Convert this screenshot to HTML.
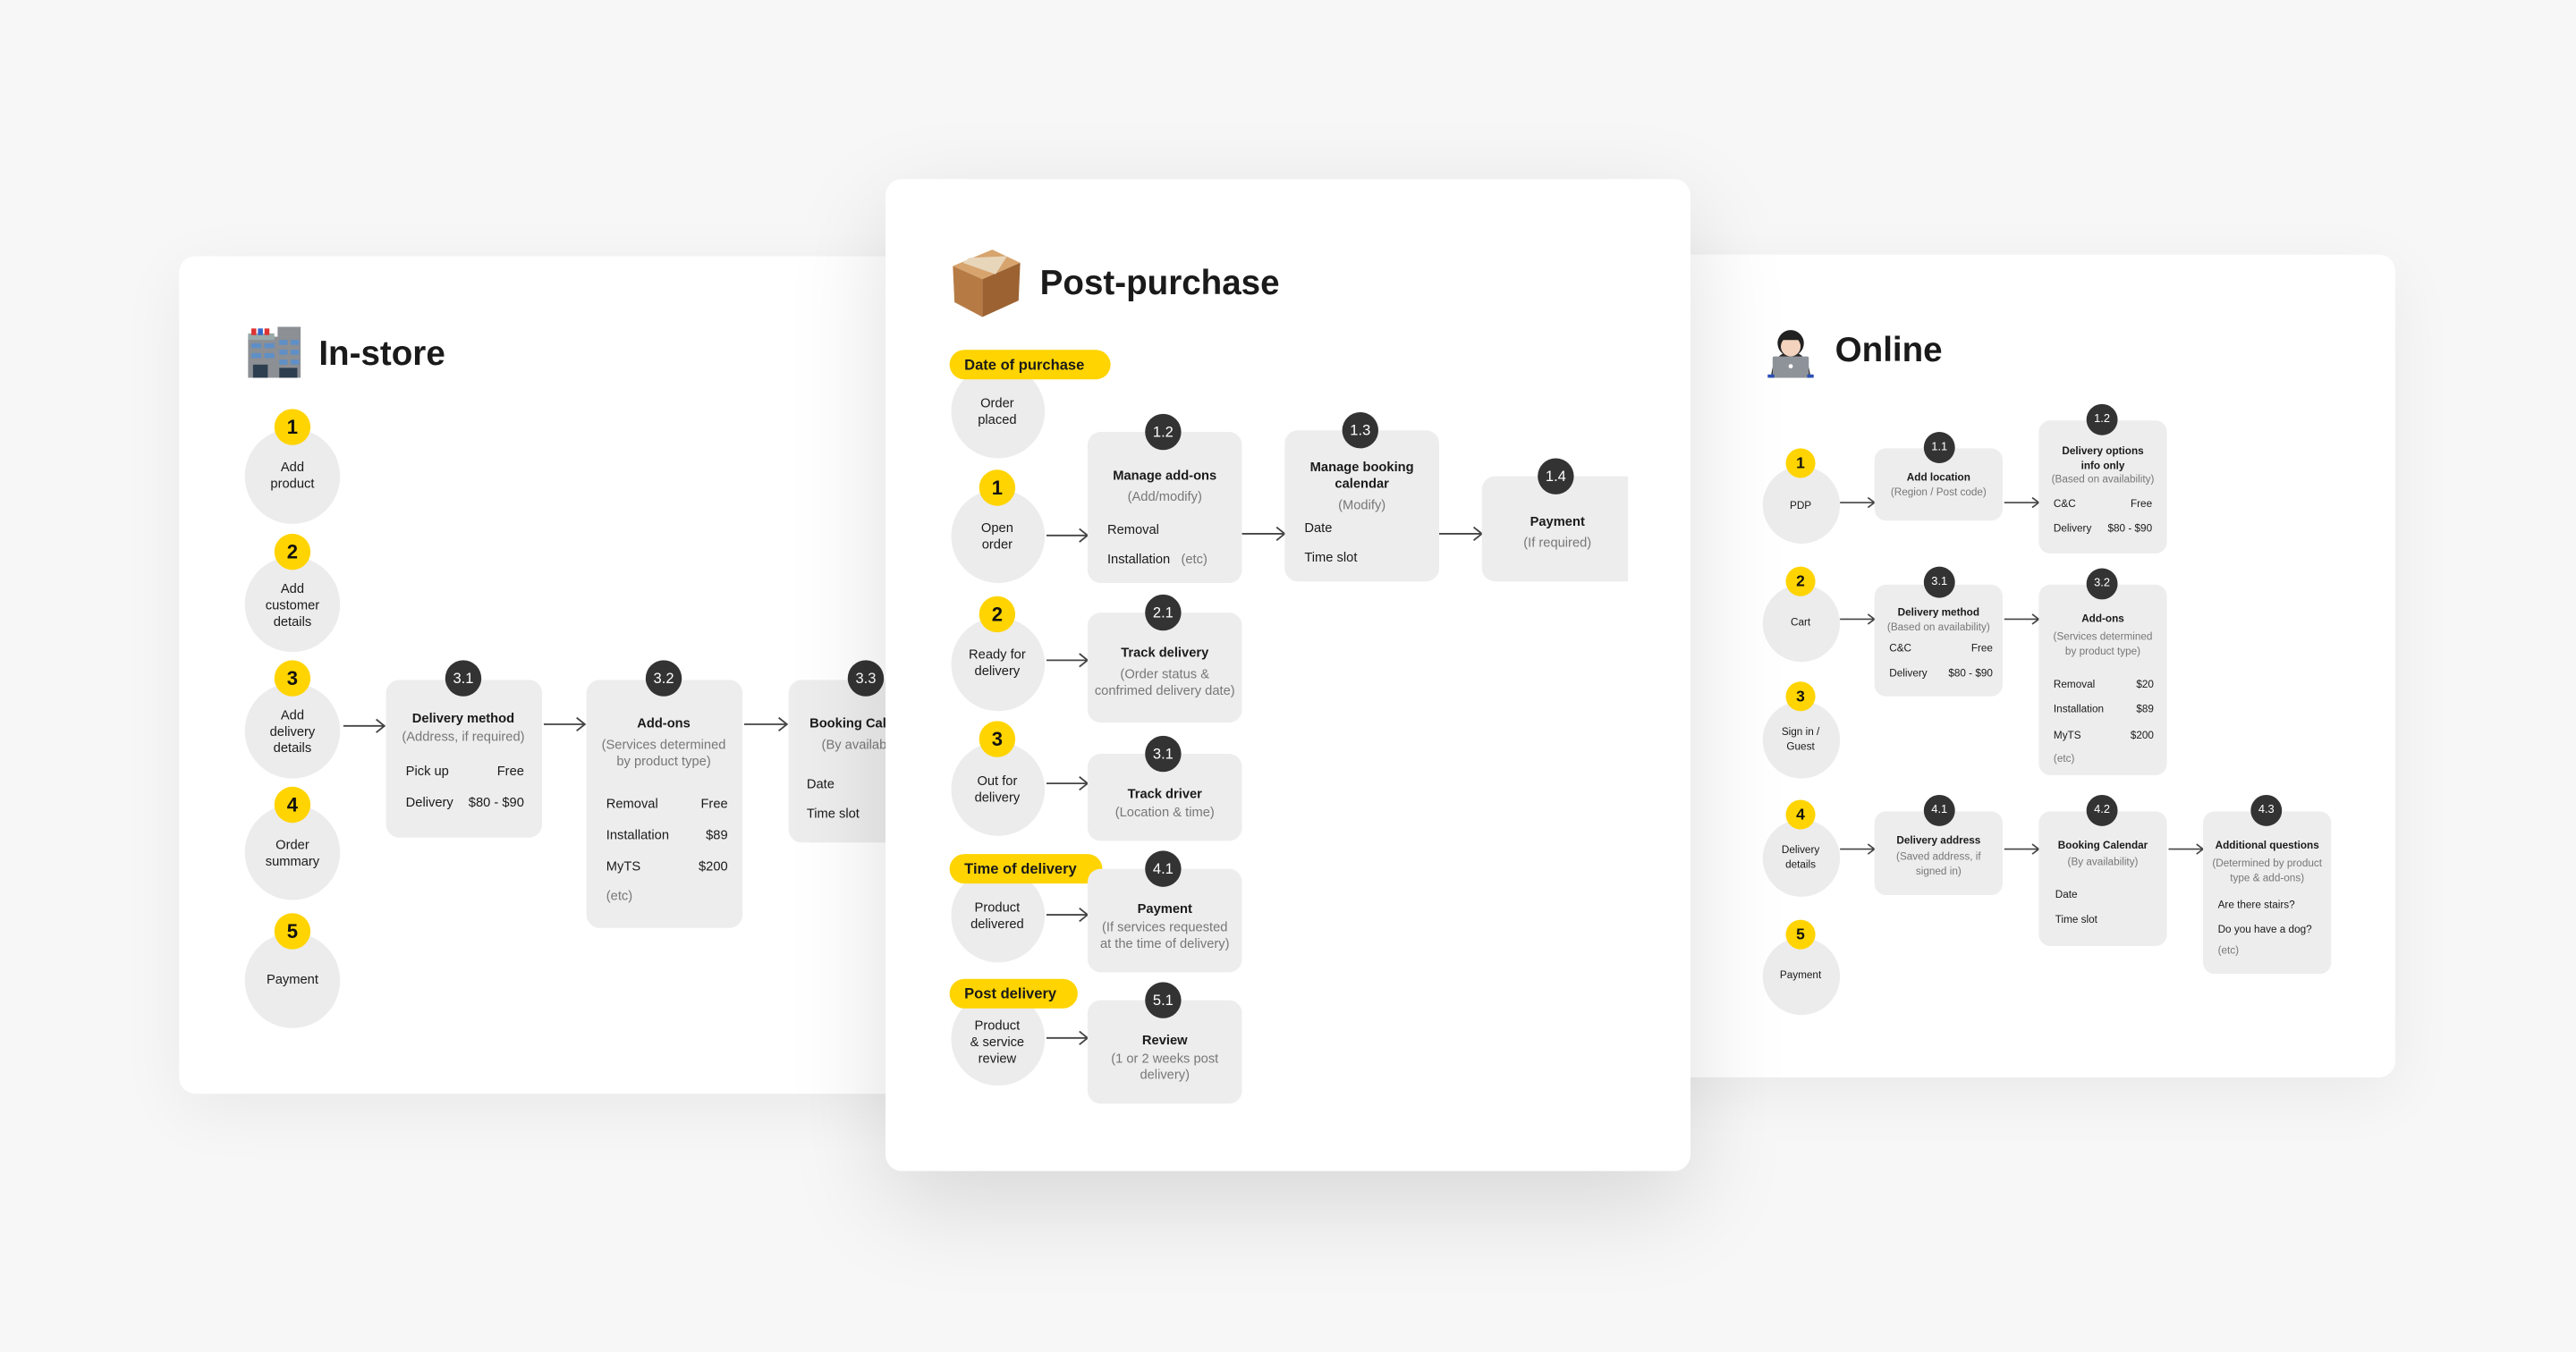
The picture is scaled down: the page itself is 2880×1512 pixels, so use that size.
<!DOCTYPE html>
<html><head><meta charset="utf-8"><style>
html,body{margin:0;padding:0;width:2880px;height:1511px;overflow:hidden;background:#f7f7f7}
#w{position:absolute;left:0;top:0;width:1568px;height:823px;transform:scale(1.83673);transform-origin:0 0;font-family:"Liberation Sans",sans-serif;color:#1a1a1a}
.L{position:absolute;left:0;top:0;width:1568px;height:823px}
.card{position:absolute;background:#fff;border-radius:10px}
.c{position:absolute;border-radius:50%;background:#ececec}
.b{position:absolute;background:#ededed;border-radius:8px}
.y,.d{position:absolute;border-radius:50%;display:flex;align-items:center;justify-content:center;font-weight:bold}
.y{background:#ffd400;color:#111}
.d{background:#333;color:#fff;font-weight:normal}
.tc{position:absolute;text-align:center;transform:translate(-50%,-50%);white-space:nowrap}
.tl{position:absolute;transform:translateY(-50%);white-space:nowrap}
.r{position:absolute;display:flex;justify-content:space-between;transform:translateY(-50%);white-space:nowrap}
.g{color:#777}
.bd{font-weight:bold}
.pill{position:absolute;background:#ffd400;border-radius:9px;font-weight:bold;display:flex;align-items:center;padding:0 9px;box-sizing:border-box}
.h{position:absolute;font-weight:bold;transform:translateY(-50%);white-space:nowrap}
svg{position:absolute;left:0;top:0}
.s8{font-size:8px;line-height:10px}
.s6{font-size:6.4px;line-height:8.5px}
</style></head><body><div id="w">

<!-- In-store -->
<div class="L" style="z-index:1">
<div class="card" style="left:109px;top:156px;width:460px;height:510px;box-shadow:0 10px 40px rgba(0,0,0,0.06)"></div>
<svg width="1568" height="823" viewBox="0 0 1568 823"><g fill="none" stroke="#444" stroke-width="1"><path d="M209 442H234M229 438l5 4-5 4M331 441H356M351 437l5 4-5 4M453 441H479M474 437l5 4-5 4"/></g>
<g><rect x="151" y="205" width="32" height="25" fill="#8c8f94"/><rect x="151" y="203" width="16" height="4" fill="#9aa"/><rect x="153" y="200" width="3" height="4" fill="#d33"/><rect x="157" y="200" width="3" height="4" fill="#36c"/><rect x="161" y="200" width="3" height="4" fill="#d33"/><rect x="169" y="199" width="14" height="6" fill="#8c8f94"/>
<g fill="#5e8fc7"><rect x="153" y="209" width="6" height="3"/><rect x="161" y="209" width="6" height="3"/><rect x="170" y="207" width="5" height="3"/><rect x="177" y="207" width="5" height="3"/><rect x="153" y="215" width="6" height="3"/><rect x="161" y="215" width="6" height="3"/><rect x="170" y="213" width="5" height="3"/><rect x="177" y="213" width="5" height="3"/><rect x="170" y="219" width="5" height="3"/><rect x="177" y="219" width="5" height="3"/></g>
<g fill="#2d3e50"><rect x="154" y="222" width="9" height="8"/><rect x="170" y="224" width="11" height="6"/></g></g></svg>
<div class="h" style="left:194px;top:216px;font-size:21px">In-store</div>

<div class="c" style="left:149px;top:261px;width:58px;height:58px"></div>
<div class="c" style="left:149px;top:339px;width:58px;height:58px"></div>
<div class="c" style="left:149px;top:416px;width:58px;height:58px"></div>
<div class="c" style="left:149px;top:490px;width:58px;height:58px"></div>
<div class="c" style="left:149px;top:568px;width:58px;height:58px"></div>
<div class="y" style="left:167px;top:249px;width:22px;height:22px;font-size:12px">1</div>
<div class="y" style="left:167px;top:325px;width:22px;height:22px;font-size:12px">2</div>
<div class="y" style="left:167px;top:402px;width:22px;height:22px;font-size:12px">3</div>
<div class="y" style="left:167px;top:479px;width:22px;height:22px;font-size:12px">4</div>
<div class="y" style="left:167px;top:556px;width:22px;height:22px;font-size:12px">5</div>
<div class="tc s8" style="left:178px;top:290px">Add<br>product</div>
<div class="tc s8" style="left:178px;top:369px">Add<br>customer<br>details</div>
<div class="tc s8" style="left:178px;top:446px">Add<br>delivery<br>details</div>
<div class="tc s8" style="left:178px;top:520px">Order<br>summary</div>
<div class="tc s8" style="left:178px;top:597px">Payment</div>

<div class="b" style="left:235px;top:414px;width:95px;height:96px"></div>
<div class="d" style="left:271px;top:402px;width:22px;height:22px;font-size:9px">3.1</div>
<div class="tc s8 bd" style="left:282px;top:438px">Delivery method</div>
<div class="tc s8 g" style="left:282px;top:449px">(Address, if required)</div>
<div class="r s8" style="left:247px;width:72px;top:470px"><span>Pick up</span><span>Free</span></div>
<div class="r s8" style="left:247px;width:72px;top:489px"><span>Delivery</span><span>$80 - $90</span></div>

<div class="b" style="left:357px;top:414px;width:95px;height:151px"></div>
<div class="d" style="left:393px;top:402px;width:22px;height:22px;font-size:9px">3.2</div>
<div class="tc s8 bd" style="left:404px;top:441px">Add-ons</div>
<div class="tc s8 g" style="left:404px;top:459px">(Services determined<br>by product type)</div>
<div class="r s8" style="left:369px;width:74px;top:490px"><span>Removal</span><span>Free</span></div>
<div class="r s8" style="left:369px;width:74px;top:509px"><span>Installation</span><span>$89</span></div>
<div class="r s8" style="left:369px;width:74px;top:528px"><span>MyTS</span><span>$200</span></div>
<div class="tl s8 g" style="left:369px;top:546px">(etc)</div>

<div class="b" style="left:480px;top:414px;width:95px;height:99px"></div>
<div class="d" style="left:516px;top:402px;width:22px;height:22px;font-size:9px">3.3</div>
<div class="tc s8 bd" style="left:527px;top:441px">Booking Calendar</div>
<div class="tc s8 g" style="left:527px;top:454px">(By availability)</div>
<div class="tl s8" style="left:491px;top:478px">Date</div>
<div class="tl s8" style="left:491px;top:496px">Time slot</div>
</div>

<!-- Online -->
<div class="L" style="z-index:2">
<div class="card" style="left:1000px;top:155px;width:458px;height:501px;box-shadow:0 10px 40px rgba(0,0,0,0.06)"></div>
<svg width="1568" height="823" viewBox="0 0 1568 823"><g fill="none" stroke="#444" stroke-width="0.9"><path d="M1120 306H1141M1137 303l4 3-4 3M1220 306H1241M1237 303l4 3-4 3M1120 377H1141M1137 374l4 3-4 3M1220 377H1241M1237 374l4 3-4 3M1120 517H1141M1137 514l4 3-4 3M1220 517H1241M1237 514l4 3-4 3M1320 517H1341M1337 514l4 3-4 3"/></g>
<g><path d="M1078 230 Q1079 215 1090 214 Q1101 215 1102 230Z" fill="#2a2a2a"/><circle cx="1090" cy="209" r="8" fill="#222"/><circle cx="1090" cy="211" r="6" fill="#f3d3be"/><path d="M1084 207 Q1090 200 1096 207" fill="#222"/><rect x="1079" y="217" width="22" height="13" rx="1" fill="#8e939a"/><circle cx="1090" cy="223" r="1.3" fill="#fff"/><rect x="1076" y="228" width="4" height="2" fill="#2a4fb5"/><rect x="1100" y="228" width="4" height="2" fill="#2a4fb5"/></g></svg>
<div class="h" style="left:1117px;top:214px;font-size:21px">Online</div>

<div class="c" style="left:1073px;top:284px;width:47px;height:47px"></div>
<div class="c" style="left:1073px;top:356px;width:47px;height:47px"></div>
<div class="c" style="left:1073px;top:427px;width:47px;height:47px"></div>
<div class="c" style="left:1073px;top:499px;width:47px;height:47px"></div>
<div class="c" style="left:1073px;top:571px;width:47px;height:47px"></div>
<div class="y" style="left:1087px;top:273px;width:18px;height:18px;font-size:9.5px">1</div>
<div class="y" style="left:1087px;top:345px;width:18px;height:18px;font-size:9.5px">2</div>
<div class="y" style="left:1087px;top:415px;width:18px;height:18px;font-size:9.5px">3</div>
<div class="y" style="left:1087px;top:487px;width:18px;height:18px;font-size:9.5px">4</div>
<div class="y" style="left:1087px;top:560px;width:18px;height:18px;font-size:9.5px">5</div>
<div class="tc s6" style="left:1096px;top:309px">PDP</div>
<div class="tc s6" style="left:1096px;top:380px">Cart</div>
<div class="tc s6" style="left:1096px;top:451px">Sign in /<br>Guest</div>
<div class="tc s6" style="left:1096px;top:523px">Delivery<br>details</div>
<div class="tc s6" style="left:1096px;top:595px">Payment</div>

<div class="b" style="left:1141px;top:273px;width:78px;height:44px;border-radius:7px"></div>
<div class="d" style="left:1171px;top:263px;width:19px;height:19px;font-size:7px">1.1</div>
<div class="tc s6 bd" style="left:1180px;top:292px">Add location</div>
<div class="tc s6 g" style="left:1180px;top:301px">(Region / Post code)</div>

<div class="b" style="left:1241px;top:256px;width:78px;height:81px;border-radius:7px"></div>
<div class="d" style="left:1270px;top:246px;width:19px;height:19px;font-size:7px">1.2</div>
<div class="tc s6 bd" style="left:1280px;top:280px">Delivery options<br>info only</div>
<div class="tc s6 g" style="left:1280px;top:293px">(Based on availability)</div>
<div class="r s6" style="left:1250px;width:60px;top:308px"><span>C&amp;C</span><span>Free</span></div>
<div class="r s6" style="left:1250px;width:60px;top:323px"><span>Delivery</span><span>$80 - $90</span></div>

<div class="b" style="left:1141px;top:356px;width:78px;height:68px;border-radius:7px"></div>
<div class="d" style="left:1171px;top:345px;width:19px;height:19px;font-size:7px">3.1</div>
<div class="tc s6 bd" style="left:1180px;top:374px">Delivery method</div>
<div class="tc s6 g" style="left:1180px;top:383px">(Based on availability)</div>
<div class="r s6" style="left:1150px;width:63px;top:396px"><span>C&amp;C</span><span>Free</span></div>
<div class="r s6" style="left:1150px;width:63px;top:411px"><span>Delivery</span><span>$80 - $90</span></div>

<div class="b" style="left:1241px;top:356px;width:78px;height:116px;border-radius:7px"></div>
<div class="d" style="left:1270px;top:346px;width:19px;height:19px;font-size:7px">3.2</div>
<div class="tc s6 bd" style="left:1280px;top:378px">Add-ons</div>
<div class="tc s6 g" style="left:1280px;top:393px">(Services determined<br>by product type)</div>
<div class="r s6" style="left:1250px;width:61px;top:418px"><span>Removal</span><span>$20</span></div>
<div class="r s6" style="left:1250px;width:61px;top:433px"><span>Installation</span><span>$89</span></div>
<div class="r s6" style="left:1250px;width:61px;top:449px"><span>MyTS</span><span>$200</span></div>
<div class="tl s6 g" style="left:1250px;top:463px">(etc)</div>

<div class="b" style="left:1141px;top:494px;width:78px;height:51px;border-radius:7px"></div>
<div class="d" style="left:1171px;top:484px;width:19px;height:19px;font-size:7px">4.1</div>
<div class="tc s6 bd" style="left:1180px;top:513px">Delivery address</div>
<div class="tc s6 g" style="left:1180px;top:527px">(Saved address, if<br>signed in)</div>

<div class="b" style="left:1241px;top:494px;width:78px;height:82px;border-radius:7px"></div>
<div class="d" style="left:1270px;top:484px;width:19px;height:19px;font-size:7px">4.2</div>
<div class="tc s6 bd" style="left:1280px;top:516px">Booking Calendar</div>
<div class="tc s6 g" style="left:1280px;top:526px">(By availability)</div>
<div class="tl s6" style="left:1251px;top:546px">Date</div>
<div class="tl s6" style="left:1251px;top:561px">Time slot</div>

<div class="b" style="left:1341px;top:494px;width:78px;height:99px;border-radius:7px"></div>
<div class="d" style="left:1370px;top:484px;width:19px;height:19px;font-size:7px">4.3</div>
<div class="tc s6 bd" style="left:1380px;top:516px">Additional questions</div>
<div class="tc s6 g" style="left:1380px;top:531px">(Determined by product<br>type &amp; add-ons)</div>
<div class="tl s6" style="left:1350px;top:552px">Are there stairs?</div>
<div class="tl s6" style="left:1350px;top:567px">Do you have a dog?</div>
<div class="tl s6 g" style="left:1350px;top:580px">(etc)</div>
</div>

<!-- Post-purchase -->
<div class="L" style="z-index:3">
<div class="card" style="left:539px;top:109px;width:490px;height:604px;box-shadow:0 20px 60px rgba(0,0,0,0.13)"></div>
<svg width="1568" height="823" viewBox="0 0 1568 823"><g fill="none" stroke="#444" stroke-width="1"><path d="M637 326H662M657 322l5 4-5 4M756 325H782M777 321l5 4-5 4M876 325H902M897 321l5 4-5 4M637 402H662M657 398l5 4-5 4M637 477H662M657 473l5 4-5 4M637 557H662M657 553l5 4-5 4M637 632H662M657 628l5 4-5 4"/></g>
<g><path d="M580 162 L604 152 L621 160 L598 170Z" fill="#d7a46e"/><path d="M580 162 L598 170 L598 193 L581 184Z" fill="#b67b45"/><path d="M598 170 L621 160 L620 183 L598 193Z" fill="#9c6232"/><path d="M590 157 L613 156 L606 167 L586 160Z" fill="#e8d6bb"/><rect x="600" y="171" width="5" height="5" fill="#eee" transform="skewY(-20)"/></g></svg>
<div class="h" style="left:633px;top:173px;font-size:21px">Post-purchase</div>

<div class="c" style="left:579px;top:222px;width:57px;height:57px"></div>
<div class="c" style="left:579px;top:298px;width:57px;height:57px"></div>
<div class="c" style="left:579px;top:376px;width:57px;height:57px"></div>
<div class="c" style="left:579px;top:452px;width:57px;height:57px"></div>
<div class="c" style="left:579px;top:529px;width:57px;height:57px"></div>
<div class="c" style="left:579px;top:604px;width:57px;height:57px"></div>
<div class="pill" style="left:578px;top:213px;width:98px;height:18px;font-size:9px">Date of purchase</div>
<div class="pill" style="left:578px;top:520px;width:93px;height:18px;font-size:9px">Time of delivery</div>
<div class="pill" style="left:578px;top:596px;width:78px;height:18px;font-size:9px">Post delivery</div>
<div class="y" style="left:596px;top:286px;width:22px;height:22px;font-size:12px">1</div>
<div class="y" style="left:596px;top:363px;width:22px;height:22px;font-size:12px">2</div>
<div class="y" style="left:596px;top:439px;width:22px;height:22px;font-size:12px">3</div>
<div class="tc s8" style="left:607px;top:251px">Order<br>placed</div>
<div class="tc s8" style="left:607px;top:327px">Open<br>order</div>
<div class="tc s8" style="left:607px;top:404px">Ready for<br>delivery</div>
<div class="tc s8" style="left:607px;top:481px">Out for<br>delivery</div>
<div class="tc s8" style="left:607px;top:558px">Product<br>delivered</div>
<div class="tc s8" style="left:607px;top:635px">Product<br>&amp; service<br>review</div>

<div class="b" style="left:662px;top:263px;width:94px;height:92px"></div>
<div class="d" style="left:697px;top:252px;width:22px;height:22px;font-size:9px">1.2</div>
<div class="tc s8 bd" style="left:709px;top:290px">Manage add-ons</div>
<div class="tc s8 g" style="left:709px;top:303px">(Add/modify)</div>
<div class="tl s8" style="left:674px;top:323px">Removal</div>
<div class="tl s8" style="left:674px;top:341px">Installation &nbsp;&nbsp;<span class="g">(etc)</span></div>

<div class="b" style="left:782px;top:262px;width:94px;height:92px"></div>
<div class="d" style="left:817px;top:251px;width:22px;height:22px;font-size:9px">1.3</div>
<div class="tc s8 bd" style="left:829px;top:290px">Manage booking<br>calendar</div>
<div class="tc s8 g" style="left:829px;top:308px">(Modify)</div>
<div class="tl s8" style="left:794px;top:322px">Date</div>
<div class="tl s8" style="left:794px;top:340px">Time slot</div>

<div class="b" style="left:902px;top:290px;width:89px;height:64px;border-radius:8px 0 0 8px"></div>
<div class="d" style="left:936px;top:279px;width:22px;height:22px;font-size:9px">1.4</div>
<div class="tc s8 bd" style="left:948px;top:318px">Payment</div>
<div class="tc s8 g" style="left:948px;top:331px">(If required)</div>

<div class="b" style="left:662px;top:373px;width:94px;height:67px"></div>
<div class="d" style="left:697px;top:362px;width:22px;height:22px;font-size:9px">2.1</div>
<div class="tc s8 bd" style="left:709px;top:398px">Track delivery</div>
<div class="tc s8 g" style="left:709px;top:416px">(Order status &amp;<br>confrimed delivery date)</div>

<div class="b" style="left:662px;top:459px;width:94px;height:53px"></div>
<div class="d" style="left:697px;top:448px;width:22px;height:22px;font-size:9px">3.1</div>
<div class="tc s8 bd" style="left:709px;top:484px">Track driver</div>
<div class="tc s8 g" style="left:709px;top:495px">(Location &amp; time)</div>

<div class="b" style="left:662px;top:529px;width:94px;height:63px"></div>
<div class="d" style="left:697px;top:518px;width:22px;height:22px;font-size:9px">4.1</div>
<div class="tc s8 bd" style="left:709px;top:554px">Payment</div>
<div class="tc s8 g" style="left:709px;top:570px">(If services requested<br>at the time of delivery)</div>

<div class="b" style="left:662px;top:609px;width:94px;height:63px"></div>
<div class="d" style="left:697px;top:598px;width:22px;height:22px;font-size:9px">5.1</div>
<div class="tc s8 bd" style="left:709px;top:634px">Review</div>
<div class="tc s8 g" style="left:709px;top:650px">(1 or 2 weeks post<br>delivery)</div>
</div>

</div></body></html>
